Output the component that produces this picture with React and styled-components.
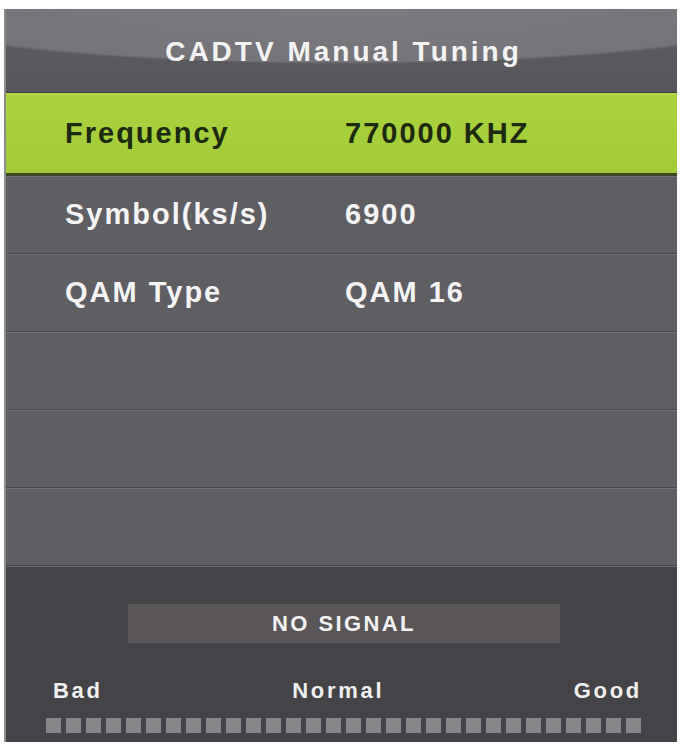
import React from 'react';
import styled, { createGlobalStyle } from 'styled-components';

const GlobalStyle = createGlobalStyle`
  html, body {
    margin: 0;
    padding: 0;
    background: #ffffff;
  }
  body {
    font-family: "Liberation Sans", Arial, sans-serif;
  }
`;

const Panel = styled.div`
  width: 673px;
  margin: 9px 0 0 4px;
  box-sizing: border-box;
  border-left: 2px solid #8c8b8f;
  background: #5f5e63;
  font-weight: 700;
`;

const TitleBar = styled.div`
  height: 84px;
  box-sizing: border-box;
  display: flex;
  align-items: center;
  justify-content: center;
  border-bottom: 1px solid #3f3e42;
  background:
    radial-gradient(465px 55px at 50% 0, #7b7a7f 0, #757479 96%, transparent 100%),
    linear-gradient(#5e5d62, #57565b);
`;

const Title = styled.h1`
  margin: 2px 0 0 4px;
  font-size: 28px;
  font-weight: 700;
  letter-spacing: 3px;
  color: #f3f3f3;
`;

const Row = styled.div`
  display: grid;
  grid-template-columns: 280px 1fr;
  align-items: center;
  box-sizing: border-box;
  height: ${(p) => (p.$active ? '83px' : '78px')};
  padding-left: 59px;
  font-size: 29px;
  letter-spacing: 2px;
  color: ${(p) => (p.$active ? '#1d2a0f' : '#f4f4f4')};
  background: ${(p) => (p.$active ? 'linear-gradient(#abd33f, #a3ca38)' : '#5f5e63')};
  border-bottom: ${(p) => (p.$active ? '3px solid #3b4823' : '1px solid #48474b')};
  box-shadow: inset 0 1px 0 ${(p) => (p.$active ? '#b6dc4e' : '#727176')};
`;

const Footer = styled.div`
  height: 176px;
  box-sizing: border-box;
  padding: 37px 0 11px 40px;
  background: #444347;
  border-top: 1px solid #6c6b70;
`;

const Meter = styled.div`
  width: 596px;
  display: flex;
  flex-direction: column;
`;

const SignalBox = styled.div`
  align-self: center;
  width: 432px;
  height: 39px;
  display: flex;
  align-items: center;
  justify-content: center;
  background: #5a5657;
  font-size: 22px;
  letter-spacing: 2.4px;
  color: #f2f2f2;
`;

const Scale = styled.div`
  margin-top: 35px;
  padding-left: 7px;
  display: flex;
  justify-content: space-between;
  font-size: 22px;
  line-height: 26px;
  letter-spacing: 2.7px;
  color: #f0f0f0;
`;

const Squares = styled.div`
  margin-top: 14px;
  display: flex;
  gap: 5px;
`;

const Square = styled.span`
  width: 15px;
  height: 15px;
  background: #878689;
`;

const rows = [
  { label: 'Frequency', value: '770000 KHZ', active: true },
  { label: 'Symbol(ks/s)', value: '6900' },
  { label: 'QAM Type', value: 'QAM 16' },
  { label: '', value: '' },
  { label: '', value: '' },
  { label: '', value: '' },
];

export default function App() {
  return (
    <>
      <GlobalStyle />
      <Panel>
        <TitleBar>
          <Title>CADTV Manual Tuning</Title>
        </TitleBar>
        {rows.map((r, i) => (
          <Row key={i} $active={r.active}>
            <span>{r.label}</span>
            <span>{r.value}</span>
          </Row>
        ))}
        <Footer>
          <Meter>
            <SignalBox>NO SIGNAL</SignalBox>
            <Scale>
              <span>Bad</span>
              <span>Normal</span>
              <span>Good</span>
            </Scale>
            <Squares>
              {Array.from({ length: 30 }, (_, i) => (
                <Square key={i} />
              ))}
            </Squares>
          </Meter>
        </Footer>
      </Panel>
    </>
  );
}
